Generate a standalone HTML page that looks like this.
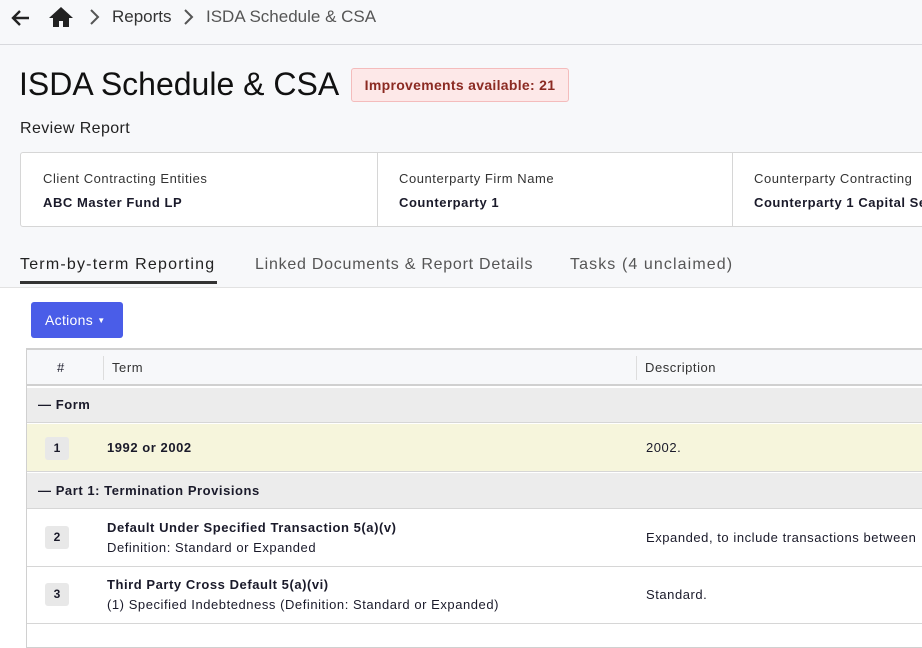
<!DOCTYPE html>
<html><head><style>
*{box-sizing:border-box;margin:0;padding:0}
body{width:922px;height:634px;overflow:hidden;background:#fff;font-family:"Liberation Sans",sans-serif;color:#1a1a2a;position:relative}
.abs{position:absolute;white-space:nowrap}
.top{position:absolute;left:0;top:0;width:922px;height:288px;background:#f7f8fa}
.t{font-size:13px;letter-spacing:0.55px}
</style></head><body>
<div class="top"></div>
<div class="abs" style="left:0;top:44px;width:922px;height:1px;background:#d8d9dd"></div>
<svg class="abs" style="left:10px;top:8px" width="22" height="20" viewBox="0 0 22 20"><path d="M19 10H4M10 3L3 10l7 7" fill="none" stroke="#222" stroke-width="2.4"/></svg>
<svg class="abs" style="left:48px;top:6px" width="26" height="22" viewBox="0 0 26 22"><path d="M13 1L1 12h4v9h6v-6h4v6h6v-9h4z" fill="#222"/></svg>
<svg class="abs" style="left:88px;top:8px" width="12" height="18" viewBox="0 0 12 18"><path d="M3 2l7 7-7 7" fill="none" stroke="#555" stroke-width="2"/></svg>
<div class="abs" style="left:112px;top:7px;font-size:17px;color:#333">Reports</div>
<svg class="abs" style="left:182px;top:8px" width="12" height="18" viewBox="0 0 12 18"><path d="M3 2l7 7-7 7" fill="none" stroke="#555" stroke-width="2"/></svg>
<div class="abs" style="left:206px;top:7px;font-size:17px;color:#555">ISDA Schedule &amp; CSA</div>
<div class="abs" style="left:19px;top:66px;font-size:32px;color:#111">ISDA Schedule &amp; CSA</div>
<div class="abs" style="left:351px;top:68px;width:218px;height:34px;border:1px solid #f4bcbc;background:#fde8e8;border-radius:3px;font-size:14px;font-weight:bold;color:#8b2a22;line-height:32px;text-align:center;letter-spacing:0.3px">Improvements available: 21</div>
<div class="abs" style="left:20px;top:120px;font-size:16px;color:#222;letter-spacing:0.4px">Review Report</div>
<div class="abs" style="left:20px;top:152px;width:910px;height:75px;background:#fff;border:1px solid #d6d6d6;border-radius:3px"></div>
<div class="abs" style="left:377px;top:153px;width:1px;height:73px;background:#d6d6d6"></div>
<div class="abs" style="left:732px;top:153px;width:1px;height:73px;background:#d6d6d6"></div>
<div class="abs t" style="left:43px;top:171px;color:#333">Client Contracting Entities</div>
<div class="abs t" style="left:43px;top:195px;font-weight:bold">ABC Master Fund LP</div>
<div class="abs t" style="left:399px;top:171px;color:#333">Counterparty Firm Name</div>
<div class="abs t" style="left:399px;top:195px;font-weight:bold">Counterparty 1</div>
<div class="abs t" style="left:754px;top:171px;color:#333">Counterparty Contracting</div>
<div class="abs t" style="left:754px;top:195px;font-weight:bold">Counterparty 1 Capital Se</div>
<div class="abs" style="left:20px;top:256px;font-size:16px;color:#222;letter-spacing:1.2px">Term-by-term Reporting</div>
<div class="abs" style="left:20px;top:281px;width:197px;height:3px;background:#333"></div>
<div class="abs" style="left:255px;top:256px;font-size:16px;color:#555;letter-spacing:0.75px">Linked Documents &amp; Report Details</div>
<div class="abs" style="left:570px;top:256px;font-size:16px;color:#555;letter-spacing:1.1px">Tasks (4 unclaimed)</div>
<div class="abs" style="left:0;top:287px;width:922px;height:1px;background:#e2e2e2"></div>
<div class="abs" style="left:31px;top:302px;width:92px;height:36px;background:#4a5de8;border-radius:3px;color:#fff;font-size:14px;line-height:36px;padding-left:14px;letter-spacing:0.3px">Actions <span style="font-size:8px;vertical-align:2px">▼</span></div>
<div class="abs" style="left:26px;top:348px;width:900px;height:300px;border:1px solid #d0d0d0;border-top:2px solid #d0d0d0"></div>
<div class="abs" style="left:27px;top:350px;width:900px;height:36px;background:#f7f8fa;border-bottom:2px solid #d0d0d0"></div>
<div class="abs" style="left:103px;top:356px;width:1px;height:24px;background:#ddd"></div>
<div class="abs" style="left:636px;top:356px;width:1px;height:24px;background:#ddd"></div>
<div class="abs t" style="left:57px;top:360px">#</div>
<div class="abs t" style="left:112px;top:360px;color:#333">Term</div>
<div class="abs t" style="left:645px;top:360px;color:#333">Description</div>
<div class="abs" style="left:27px;top:388px;width:900px;height:35px;background:#ececec;border-bottom:1px solid #d6d6d6"></div>
<div class="abs t" style="left:38px;top:397px;font-weight:bold">— Form</div>
<div class="abs" style="left:27px;top:424px;width:900px;height:48px;background:#f6f5dc;border-bottom:1px solid #d6d6d6"></div>
<div class="abs" style="left:45px;top:437px;width:24px;height:23px;background:#e8e8e8;border-radius:3px;font-size:12px;font-weight:bold;text-align:center;line-height:23px">1</div>
<div class="abs t" style="left:107px;top:440px;font-weight:bold">1992 or 2002</div>
<div class="abs t" style="left:646px;top:440px">2002.</div>
<div class="abs" style="left:27px;top:473px;width:900px;height:36px;background:#ececec;border-bottom:1px solid #d6d6d6"></div>
<div class="abs t" style="left:38px;top:483px;font-weight:bold">— Part 1: Termination Provisions</div>
<div class="abs" style="left:27px;top:566px;width:900px;height:1px;background:#d6d6d6"></div>
<div class="abs" style="left:27px;top:623px;width:900px;height:1px;background:#d6d6d6"></div>
<div class="abs" style="left:45px;top:526px;width:24px;height:23px;background:#e8e8e8;border-radius:3px;font-size:12px;font-weight:bold;text-align:center;line-height:23px">2</div>
<div class="abs t" style="left:107px;top:520px;font-weight:bold">Default Under Specified Transaction 5(a)(v)</div>
<div class="abs t" style="left:107px;top:540px">Definition: Standard or Expanded</div>
<div class="abs t" style="left:646px;top:530px">Expanded, to include transactions between</div>
<div class="abs" style="left:45px;top:583px;width:24px;height:23px;background:#e8e8e8;border-radius:3px;font-size:12px;font-weight:bold;text-align:center;line-height:23px">3</div>
<div class="abs t" style="left:107px;top:577px;font-weight:bold">Third Party Cross Default 5(a)(vi)</div>
<div class="abs t" style="left:107px;top:597px">(1) Specified Indebtedness (Definition: Standard or Expanded)</div>
<div class="abs t" style="left:646px;top:587px">Standard.</div>
</body></html>
